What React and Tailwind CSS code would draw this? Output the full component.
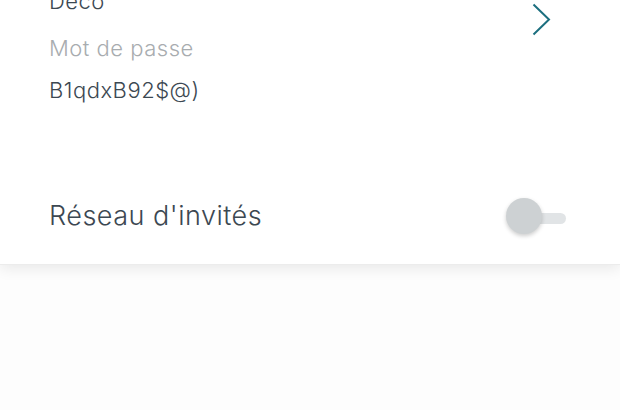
import React, { useState } from 'react'

const App = () => {
  const [guestOn, setGuestOn] = useState(false)

  return (
    <div
      className="w-[620px] h-[410px] overflow-hidden bg-[#fdfdfd]"
      style={{ fontFamily: 'Inter, "Open Sans", sans-serif' }}
    >
      {/* Settings card */}
      <div className="relative flex flex-col bg-white h-[265px] shadow-[0_3px_14px_rgba(0,0,0,0.09)] border-b border-[#ececec]">
        {/* Network name / password */}
        <div className="flex items-start pl-[49px] pr-[69px] -mt-[11px]">
          <div className="flex-1 flex flex-col font-light tracking-[0.5px]">
            <div className="text-[22px] leading-[24px] text-[#3c4852]">Deco</div>
            <div className="mt-[23px] text-[22px] leading-[24px] text-[#a8acaf]">Mot de passe</div>
            <div className="mt-[18px] text-[22px] leading-[24px] text-[#3c4852]">B1qdxB92$@)</div>
          </div>
          <svg
            className="mt-[14px]"
            width="19"
            height="33"
            viewBox="0 0 19 33"
            fill="none"
          >
            <path d="M1.5 1.5 L17 16.5 L1.5 31.5" stroke="#1c6f7f" strokeWidth="2" />
          </svg>
        </div>

        {/* Guest network */}
        <div className="flex items-center justify-between pl-[49px] pr-[54px] mt-[94px] h-[40px]">
          <span className="text-[27px] leading-[32px] font-light tracking-[0.5px] text-[#3c4852]">Réseau d'invités</span>
          <button
            onClick={() => setGuestOn(!guestOn)}
            className="relative w-[60px] h-[36px] flex items-center"
          >
            <span className="absolute right-0 top-[15px] w-[40px] h-[11px] rounded-full bg-[#e1e4e6]" />
            <span className="absolute left-0 top-0 w-[36px] h-[36px] rounded-full bg-[#cdd1d3] shadow-[0_2px_4px_rgba(0,0,0,0.2)]" />
          </button>
        </div>
      </div>
    </div>
  )
}

export default App
